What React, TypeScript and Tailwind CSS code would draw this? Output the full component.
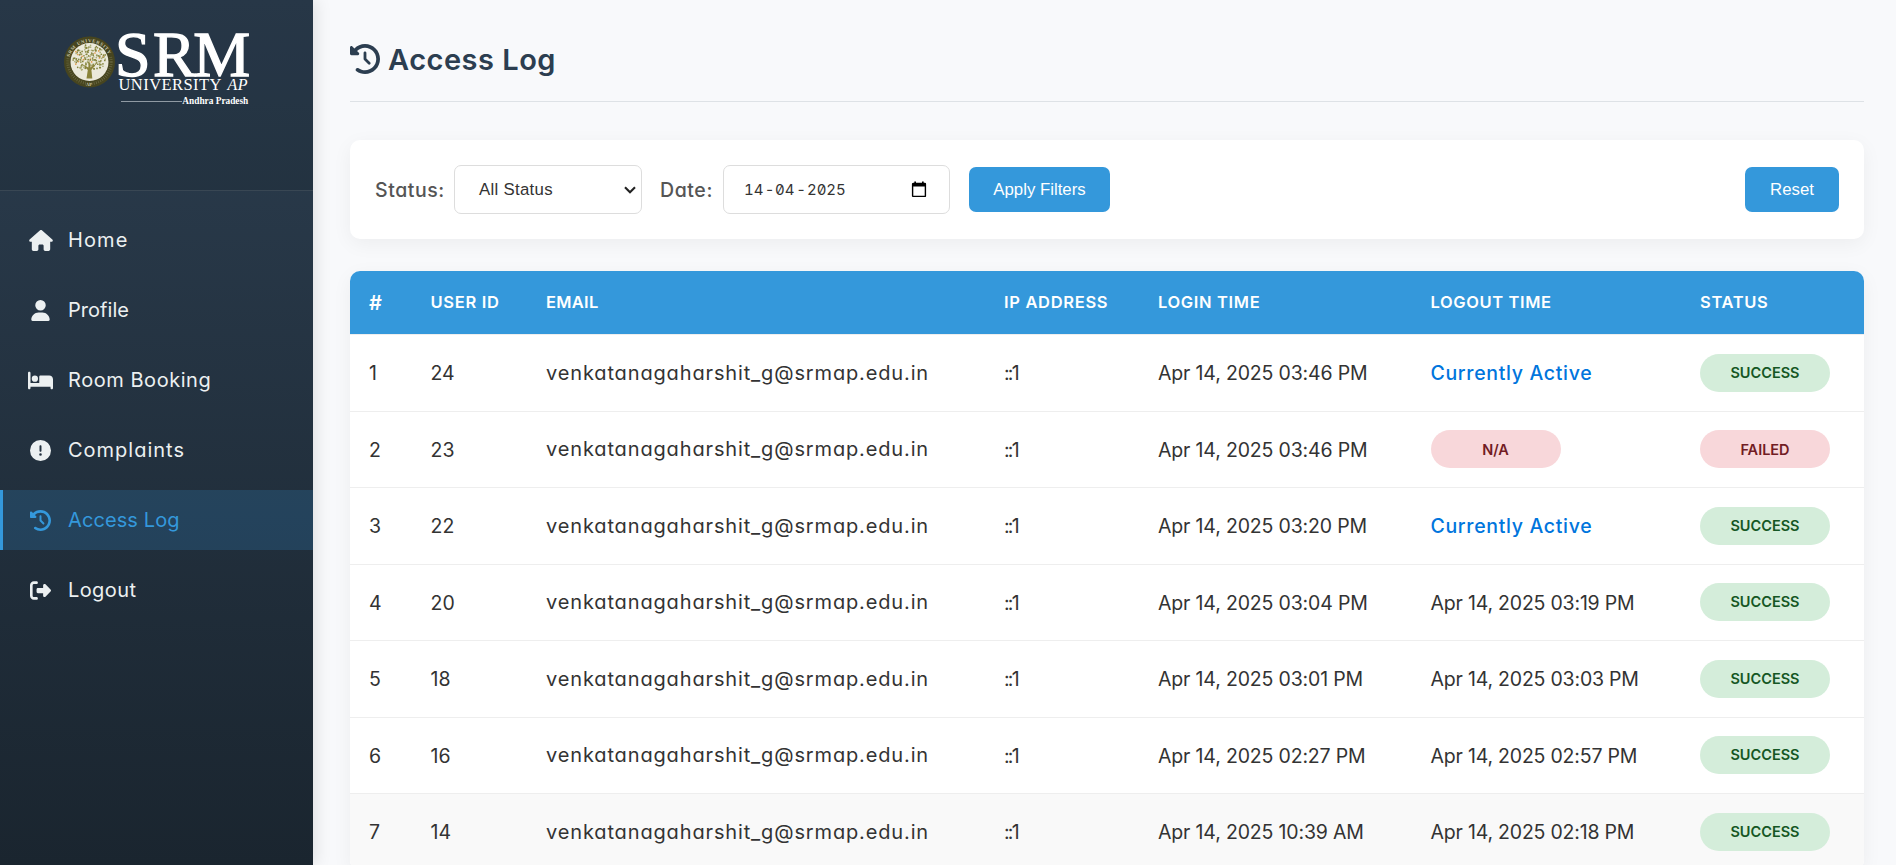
import type { ReactNode } from "react";
import { FaHouse, FaUser, FaBed, FaCircleExclamation, FaClockRotateLeft, FaRightFromBracket } from "react-icons/fa6";

type NavItem = { label: string; icon: ReactNode; tracking: string; active?: boolean };

const navItems: NavItem[] = [
  { label: "Home", icon: <FaHouse className="h-[21px] w-6" />, tracking: "tracking-[1.1px]" },
  { label: "Profile", icon: <FaUser className="h-[21px] w-[19px]" />, tracking: "tracking-[0.05px]" },
  { label: "Room Booking", icon: <FaBed className="h-[21px] w-[26px]" />, tracking: "tracking-[0.55px]" },
  { label: "Complaints", icon: <FaCircleExclamation className="size-[21px]" />, tracking: "tracking-[1px]" },
  { label: "Access Log", icon: <FaClockRotateLeft className="size-[21px]" />, tracking: "tracking-[0.1px]", active: true },
  { label: "Logout", icon: <FaRightFromBracket className="size-[21px]" />, tracking: "tracking-[0.4px]" },
];

type LogEntry = { id: number; user: number; login: string; logout: string; failed?: boolean };

const entries: LogEntry[] = [
  { id: 1, user: 24, login: "Apr 14, 2025 03:46 PM", logout: "Currently Active" },
  { id: 2, user: 23, login: "Apr 14, 2025 03:46 PM", logout: "N/A", failed: true },
  { id: 3, user: 22, login: "Apr 14, 2025 03:20 PM", logout: "Currently Active" },
  { id: 4, user: 20, login: "Apr 14, 2025 03:04 PM", logout: "Apr 14, 2025 03:19 PM" },
  { id: 5, user: 18, login: "Apr 14, 2025 03:01 PM", logout: "Apr 14, 2025 03:03 PM" },
  { id: 6, user: 16, login: "Apr 14, 2025 02:27 PM", logout: "Apr 14, 2025 02:57 PM" },
  { id: 7, user: 14, login: "Apr 14, 2025 10:39 AM", logout: "Apr 14, 2025 02:18 PM" },
];

const columns = "grid grid-cols-[61.5px_115.5px_458px_154px_272.5px_269.5px_1fr] items-center pl-[19px]";

const leaves = Array.from({ length: 150 }, (_, i) => {
  const radius = 16.5 * Math.sqrt((i + 0.5) / 150);
  const angle = i * 2.39996 + Math.sin(i * 12.9) * 0.35;
  const x = 25.5 + radius * Math.cos(angle);
  const y = 25.5 + radius * 0.82 * Math.sin(angle) + Math.cos(i * 7.3) * 0.5;
  return { x, y, kind: (i * 7) % 11 };
}).filter((l) => l.y < 36 || Math.abs(l.x - 25.5) > 5);

function Logo() {
  return (
    <svg width="196" height="106" viewBox="0 0 196 106" className="block">
      <g transform="translate(0 15)">
        <circle cx="25.5" cy="29" r="25.5" fill="#47451f" />
        <circle cx="25.5" cy="29" r="21.6" fill="none" stroke="#8b8964" strokeWidth="3" strokeDasharray="0.7 1.5" opacity="0.55" />
        <path d="M4.2 23 A22 22 0 0 1 46.8 23" fill="none" stroke="#47451f" strokeWidth="5.5" />
        <circle cx="25.5" cy="29" r="19" fill="#ebe9db" />
        {leaves.map((l, i) => (
          <circle key={i} cx={l.x} cy={l.y} r={0.85} fill={l.kind === 0 ? "#e39a4c" : l.kind % 3 === 0 ? "#aeb07c" : "#85843c"} />
        ))}
        <path
          d="M22.5 45.5 L23.8 37 L18 31 L24.3 34.5 L25 26 L26.4 34.5 L33 30 L27.4 37 L28.3 45.5 Z"
          fill="#89833a"
        />
        <path id="seal-arc" d="M5.6 24 A20.8 20.8 0 0 1 45.4 24" fill="none" />
        <text fill="#cbc9ad" fontFamily="Liberation Serif, serif" fontSize="4.8" fontWeight="700">
          <textPath href="#seal-arc" textLength="50" startOffset="0">SRM UNIVERSITY</textPath>
        </text>
        <text x="22" y="53" fill="#cbc9ad" fontFamily="Liberation Serif, serif" fontSize="4.5" fontWeight="700">AP</text>
        <g fill="#ffffff" fontFamily="Liberation Serif, serif">
          <text x="50.9 89 129.2" y="42.8" fontSize="64" stroke="#ffffff" strokeWidth="1.3">SRM</text>
          <text x="54.5" y="57.3" fontSize="16.5" textLength="103" lengthAdjust="spacing">UNIVERSITY</text>
          <text x="163.5" y="57.3" fontSize="16" fontStyle="italic" textLength="20" lengthAdjust="spacing">AP</text>
          <text x="118.3" y="71" fontSize="9.8" fontWeight="700" textLength="66" lengthAdjust="spacingAndGlyphs">Andhra Pradesh</text>
        </g>
        <path d="M57 68.5 H118" stroke="#8f9aa3" strokeWidth="1" />
      </g>
    </svg>
  );
}

function Badge({ label, failed }: { label: string; failed?: boolean }) {
  return (
    <span
      className={`flex h-[38px] w-[130px] items-center justify-center rounded-full text-[14.5px] font-semibold ${
        failed ? "bg-[#f8d7da] pt-px text-[#721c24]" : "bg-[#d4edda] text-[#155724]"
      }`}
    >
      {label}
    </span>
  );
}

function LogoutCell({ entry }: { entry: LogEntry }) {
  if (entry.failed) return <Badge label={entry.logout} failed />;
  if (entry.logout === "Currently Active")
    return <span className="pt-0.5 text-[19.5px] font-medium tracking-[0.67px] text-[#0075dd]">{entry.logout}</span>;
  return <span className="pt-0.5 tracking-[-0.2px]">{entry.logout}</span>;
}

export default function App() {
  return (
    <div className="flex h-[865px] overflow-hidden bg-[#f8f9fb] font-['Inter',sans-serif] text-[#333333] [font-feature-settings:'cv11']">
      <aside className="z-10 flex w-[313px] shrink-0 flex-col bg-linear-to-b from-[#2c3e50] to-[#1a252f] shadow-[3px_0_15px_rgba(0,0,0,0.1)]">
        <div className="h-[191px] shrink-0 border-b border-white/10 bg-black/10 pt-[18px] pl-[64px]">
          <Logo />
        </div>
        <nav className="flex flex-col gap-2.5 pt-[19px]">
          {navItems.map((item) => (
            <a
              key={item.label}
              className={`flex h-[60px] items-center border-l-[3px] pl-[25px] text-[20px] ${
                item.active ? "border-[#3498db] bg-[#3498db]/20 text-[#3498db]" : "border-transparent text-[#ecf0f1]"
              }`}
            >
              <span className="flex w-[25px] justify-center">{item.icon}</span>
              <span className={`pl-[15px] ${item.tracking}`}>{item.label}</span>
            </a>
          ))}
        </nav>
      </aside>

      <main className="flex min-w-0 grow flex-col pr-8 pl-[37px]">
        <header className="flex h-[102px] shrink-0 items-center border-b border-[#dee2e6] pt-[17px]">
          <FaClockRotateLeft className="size-[30px] text-[#2c3e50]" />
          <h1 className="pt-0.5 pl-[8px] text-[29px] font-semibold tracking-[0.5px] text-[#2c3e50]">Access Log</h1>
        </header>

        <section className="mt-[38px] flex h-[99px] shrink-0 items-center rounded-[10px] bg-white px-[25px] shadow-[0_5px_20px_rgba(0,0,0,0.05)]">
          <span className="w-[79px] pt-0.5 text-[19.5px] font-medium tracking-[0.55px] text-[#555555]">Status:</span>
          <button className="flex h-[49px] w-[188px] items-center justify-between rounded-[7px] border border-[#dddddd] bg-white pr-[5px] pl-[24px] font-['Liberation_Sans',sans-serif] text-[16.8px] tracking-[0.3px]">
            All Status
            <svg width="12" height="8" viewBox="0 0 12 8" fill="none" stroke="#222222" strokeWidth="2.1">
              <path d="M1 1.2 L6 6.2 L11 1.2" />
            </svg>
          </button>
          <span className="ml-[18px] w-[63px] pt-0.5 text-[19.5px] font-medium tracking-[0.6px] text-[#555555]">Date:</span>
          <div className="flex h-[49px] w-[227px] items-center justify-between rounded-[7px] border border-[#dddddd] bg-white pr-[22px] pl-[20px]">
            <span className="flex pt-0.5 text-[15px] tracking-[-0.1px] [font-feature-settings:'tnum','zero']">
              <span className="w-[20px]">14</span>
              <span className="w-[11px] text-center">-</span>
              <span className="w-[20px]">04</span>
              <span className="w-[12px] text-center">-</span>
              <span>2025</span>
            </span>
            <svg width="16" height="17" viewBox="0 0 16 17" fill="none">
              <path d="M2.2 2.5 H13.8 Q14.4 2.5 14.4 3.1 V14.9 Q14.4 15.4 13.8 15.4 H2.2 Q1.6 15.4 1.6 14.9 V3.1 Q1.6 2.5 2.2 2.5 Z" stroke="#000000" strokeWidth="1.4" />
              <path d="M1.2 2.4 H14.8 V5.6 H1.2 Z M3.3 0.6 H5 V3 H3.3 Z M11 0.6 H12.7 V3 H11 Z" fill="#000000" />
            </svg>
          </div>
          <button className="ml-[19px] h-[45px] w-[141px] rounded-[7px] bg-[#3498db] font-['Liberation_Sans',sans-serif] text-[16.8px] text-white">Apply Filters</button>
          <button className="ml-auto h-[45px] w-[94px] rounded-[7px] bg-[#3498db] font-['Liberation_Sans',sans-serif] text-[16.8px] text-white">Reset</button>
        </section>

        <section className="mt-8 w-full shrink-0 overflow-hidden rounded-[10px] bg-white shadow-[0_5px_20px_rgba(0,0,0,0.05)]">
          <div className={`${columns} h-[63px] bg-[#3498db] text-[16.5px] font-semibold text-white`}>
            <span className="text-[20px]">#</span>
            <span className="tracking-[0.7px]">USER ID</span>
            <span className="tracking-[0.3px]">EMAIL</span>
            <span className="tracking-[0.68px]">IP ADDRESS</span>
            <span className="tracking-[0.65px]">LOGIN TIME</span>
            <span className="tracking-[0.6px]">LOGOUT TIME</span>
            <span className="tracking-[0.65px]">STATUS</span>
          </div>
          {entries.map((entry) => (
            <div
              key={entry.id}
              className={`${columns} h-[76.5px] border-t border-[#eeeeee] text-[19.5px] ${entry.id === 7 ? "bg-[#f9f9f9]" : ""}`}
            >
              <span className="pt-0.5">{entry.id}</span>
              <span className="pt-0.5">{entry.user}</span>
              <span className="text-[20px] tracking-[0.86px]">venkatanagaharshit_g@srmap.edu.in</span>
              <span className="pt-0.5 tracking-[-1.8px]">::1</span>
              <span className="pt-0.5 tracking-[-0.16px]">{entry.login}</span>
              <LogoutCell entry={entry} />
              <Badge label={entry.failed ? "FAILED" : "SUCCESS"} failed={entry.failed} />
            </div>
          ))}
        </section>
      </main>
    </div>
  );
}
